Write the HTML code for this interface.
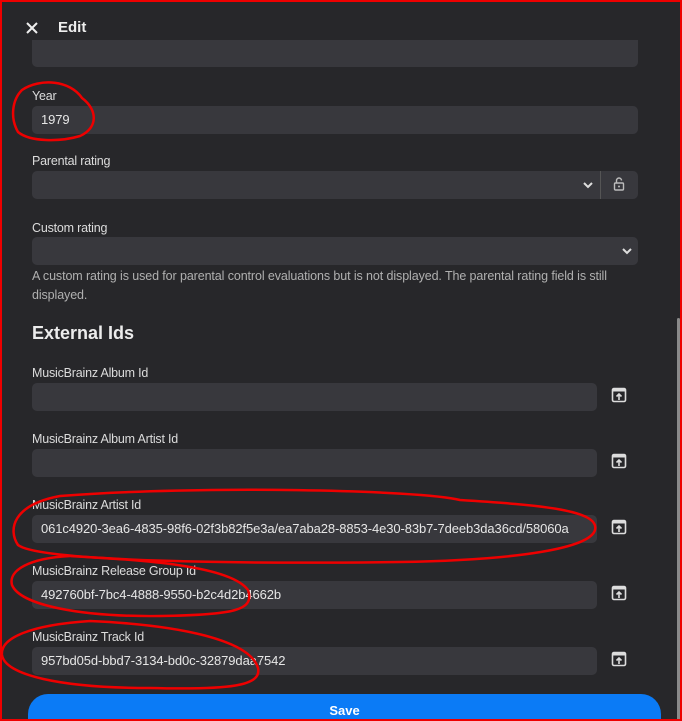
<!DOCTYPE html>
<html style="overflow:hidden;width:682px;height:721px"><head><meta charset="utf-8"><style>
*{margin:0;padding:0;box-sizing:border-box}
body{width:682px;height:721px;overflow:hidden;background:#27272a;font-family:"Liberation Sans",sans-serif;color:#e8e8e8;position:relative}
.a{position:absolute}
.lbl{position:absolute;left:32px;font-size:12.5px;color:#dcdcdc;letter-spacing:-0.2px}
.in{position:absolute;left:32px;height:28px;background:#38383d;border-radius:5px;font-size:13px;color:#e6e6e6;padding-left:9px;line-height:28px;letter-spacing:-0.1px;white-space:nowrap;overflow:hidden}
.ic{position:absolute;left:611px;width:16px;height:16px}
</style></head><body>
<div class="a" style="left:0;top:0;width:682px;height:721px;border:2px solid #e00;z-index:5;pointer-events:none"></div>
<svg class="a" style="left:25px;top:21px" width="14" height="14"><path d="M2 2L12 12M12 2L2 12" stroke="#eee" stroke-width="2"/></svg>
<div class="a" style="left:58px;top:19px;font-size:15px;font-weight:bold;color:#eee">Edit</div>
<div class="in" style="top:40px;width:606px;height:27px;border-radius:0 0 5px 5px"></div>
<div class="lbl" style="top:89px">Year</div>
<div class="in" style="top:106px;width:606px">1979</div>
<div class="lbl" style="top:154px">Parental rating</div>
<div class="in" style="top:171px;width:606px"></div>
<div class="a" style="left:600px;top:171px;width:1px;height:28px;background:#555"></div>
<svg class="a" style="left:582px;top:180px" width="12" height="10"><path d="M2 3L6 7L10 3" stroke="#ddd" stroke-width="2" fill="none"/></svg>
<svg class="a" style="left:613px;top:177px" width="12" height="14"><path d="M3.5 6V3.5a2.5 2.5 0 0 1 5 0" stroke="#bbb" stroke-width="1.4" fill="none"/><rect x="1.5" y="6" width="9" height="7" rx="1" stroke="#bbb" stroke-width="1.4" fill="none"/><circle cx="6" cy="9.5" r="1" fill="#bbb"/></svg>
<div class="lbl" style="top:221px">Custom rating</div>
<div class="in" style="top:237px;width:606px"></div>
<svg class="a" style="left:621px;top:246px" width="12" height="10"><path d="M2 3L6 7L10 3" stroke="#ddd" stroke-width="2" fill="none"/></svg>
<div class="a" style="left:32px;top:267px;width:608px;font-size:12.5px;line-height:19px;color:#b0b0b0;letter-spacing:-0.1px">A custom rating is used for parental control evaluations but is not displayed. The parental rating field is still displayed.</div>
<div class="a" style="left:32px;top:323px;font-size:18px;font-weight:bold;color:#ececec">External Ids</div>
<div class="lbl" style="top:366px">MusicBrainz Album Id</div>
<div class="in" style="top:383px;width:565px"></div>
<div class="lbl" style="top:432px">MusicBrainz Album Artist Id</div>
<div class="in" style="top:449px;width:565px"></div>
<div class="lbl" style="top:498px">MusicBrainz Artist Id</div>
<div class="in" style="top:515px;width:565px">061c4920-3ea6-4835-98f6-02f3b82f5e3a/ea7aba28-8853-4e30-83b7-7deeb3da36cd/58060a</div>
<div class="lbl" style="top:564px">MusicBrainz Release Group Id</div>
<div class="in" style="top:581px;width:565px">492760bf-7bc4-4888-9550-b2c4d2b4662b</div>
<div class="lbl" style="top:630px">MusicBrainz Track Id</div>
<div class="in" style="top:647px;width:565px">957bd05d-bbd7-3134-bd0c-32879daa7542</div>
<svg width="0" height="0" style="position:absolute"><defs><g id="ext"><rect x="1.5" y="1.5" width="13" height="13" rx="1.5" stroke="#ddd" stroke-width="1.6" fill="none"/><rect x="1.5" y="1.5" width="13" height="3" fill="#ddd"/><path d="M8 13V7M5.5 9.5L8 7L10.5 9.5" stroke="#ddd" stroke-width="1.6" fill="none"/></g></defs></svg>
<svg class="ic" style="top:387px"><use href="#ext"/></svg>
<svg class="ic" style="top:453px"><use href="#ext"/></svg>
<svg class="ic" style="top:519px"><use href="#ext"/></svg>
<svg class="ic" style="top:585px"><use href="#ext"/></svg>
<svg class="ic" style="top:651px"><use href="#ext"/></svg>
<div class="a" style="left:28px;top:694px;width:633px;height:27px;background:#0b7bf6;border-radius:20px 20px 0 0;text-align:center;font-size:13px;font-weight:bold;color:#fff;line-height:34px;overflow:hidden">Save</div>
<div class="a" style="left:677px;top:318px;width:3px;height:403px;background:#8a8a8a;border-radius:2px"></div>
<svg class="a" style="left:0;top:0;z-index:6" width="682" height="721" fill="none" stroke="#e00" stroke-width="2.5">
<path d="M22 90C40 78 70 80 82 98C98 110 98 128 80 136C60 142 30 142 18 132C10 118 12 100 22 90Z"/>
<path d="M60 496C200 485 420 490 460 500C540 505 600 510 595 530C590 548 520 560 400 562C250 564 40 562 18 545C8 530 12 505 60 496Z"/>
<path d="M70 556C140 560 230 565 248 590C255 610 235 615 160 616C80 617 20 605 12 585C8 570 30 558 70 556Z"/>
<path d="M90 621C180 625 250 640 258 668C262 686 230 690 150 688C60 688 5 675 2 655C0 638 30 625 90 621Z"/>
</svg>
</body></html>
